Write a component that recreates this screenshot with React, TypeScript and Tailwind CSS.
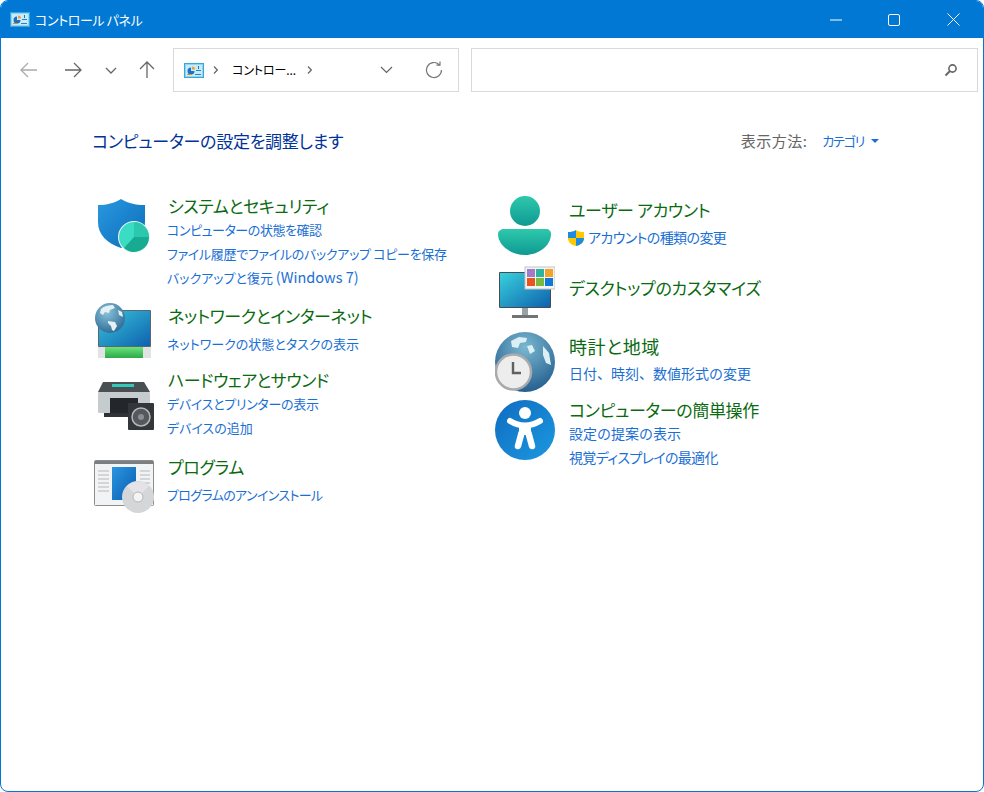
const jp = "font-['Noto_Sans_CJK_JP','Noto_Sans',sans-serif] [font-feature-settings:'palt']"

function PanelIcon() {
  return (
    <svg width="20" height="15" viewBox="0 0 20 15">
      <rect x="0.5" y="0.5" width="19" height="14" fill="#8fd4f2" stroke="#35a7d8" />
      <rect x="2" y="2" width="16" height="11" fill="#c8ebf8" />
      <path d="M7 4.500a3.500 3.500 0 1 0 3.500 3.500H7z" fill="#1f6fc4" />
      <path d="M8 3.500a3 3 0 0 1 3 3H8z" fill="#f0a030" />
      <rect x="3" y="11" width="5" height="1" fill="#e98a20" />
      <rect x="11" y="11" width="6" height="1" fill="#2a80c8" />
      <rect x="14" y="3" width="1" height="3" fill="#1f6fc4" />
      <rect x="12" y="7" width="5" height="1" fill="#2a80c8" />
    </svg>
  )
}

function ShieldIcon() {
  return (
    <svg width="60" height="60" viewBox="0 0 60 60">
      <defs>
        <linearGradient id="sh" x1="0" y1="0" x2="1" y2="1">
          <stop offset="0" stopColor="#2a98e0" />
          <stop offset="1" stopColor="#0b6cb8" />
        </linearGradient>
      </defs>
      <path d="M4 10c9 0 16-2 23-6 7 4 14 6 24 6v17c0 13-9 21-24 26C13 48 4 40 4 27z" fill="url(#sh)" />
      <circle cx="40" cy="42" r="16" fill="#f2f6f6" />
      <circle cx="40" cy="42" r="15" fill="#3adcc4" />
      <path d="M40 42V27a15 15 0 0 1 15 15z" fill="#2cc8ae" />
      <path d="M40 42h15a15 15 0 0 1-25 11z" fill="#18ab92" />
    </svg>
  )
}

function NetworkIcon() {
  return (
    <svg width="60" height="60" viewBox="0 0 60 60">
      <defs>
        <linearGradient id="nm" x1="0" y1="0" x2="1" y2="1">
          <stop offset="0" stopColor="#38c4dc" />
          <stop offset="1" stopColor="#0f62ae" />
        </linearGradient>
        <linearGradient id="ng" x1="0" y1="0" x2="0" y2="1">
          <stop offset="0" stopColor="#6ae47a" />
          <stop offset="1" stopColor="#2ea84a" />
        </linearGradient>
        <radialGradient id="nb" cx="0.4" cy="0.3" r="0.8">
          <stop offset="0" stopColor="#8cc4dc" />
          <stop offset="1" stopColor="#24628e" />
        </radialGradient>
      </defs>
      <rect x="4" y="10" width="53" height="37" rx="1" fill="#5a6670" />
      <rect x="5" y="11" width="51" height="35" fill="url(#nm)" />
      <rect x="4" y="47" width="53" height="11" fill="#dfe3e3" />
      <rect x="11" y="47" width="38" height="11" fill="url(#ng)" />
      <circle cx="16" cy="18" r="15" fill="url(#nb)" />
      <path d="M7 9c3-3 8-4 12-4l2 3-5 2-1 3-4-1-2 3-3-2zM14 21l7 1 2 4-3 5-2-1-1-4-3-3zM24 10l4 2 1 5-4-2z" fill="#e4f0f4" />
    </svg>
  )
}

function PrinterIcon() {
  return (
    <svg width="60" height="60" viewBox="0 0 60 60">
      <path d="M9 8h41l6 10H4z" fill="#4a4f54" />
      <rect x="18" y="10" width="22" height="3" fill="#34c8b8" />
      <rect x="4" y="18" width="52" height="21" rx="1" fill="#c6cbcd" />
      <rect x="16" y="24" width="28" height="15" fill="#23262a" />
      <rect x="10" y="39" width="34" height="4" fill="#2f3236" />
      <rect x="34" y="29" width="26" height="27" rx="1" fill="#33373b" />
      <circle cx="47" cy="43" r="9" fill="#55595d" stroke="#b4b8ba" strokeWidth="1.500" />
      <circle cx="47" cy="43" r="3" fill="#8a8e92" />
    </svg>
  )
}

function ProgramIcon() {
  return (
    <svg width="60" height="60" viewBox="0 0 60 60">
      <defs>
        <linearGradient id="pb" x1="0" y1="0" x2="1" y2="1">
          <stop offset="0" stopColor="#2a96e0" />
          <stop offset="1" stopColor="#0a5cb0" />
        </linearGradient>
      </defs>
      <rect x="0.5" y="5.500" width="59" height="45" rx="1" fill="#f1f3f4" stroke="#8c8c8c" />
      <rect x="1" y="6" width="58" height="3" fill="#7b7f82" />
      <rect x="18" y="12" width="24" height="33" fill="url(#pb)" />
      <path d="M4 16h11M4 20h11M4 24h11M4 28h11M4 32h11M4 36h11M46 16h10M46 20h10M46 24h10M46 28h10" stroke="#b5b8ba" />
      <circle cx="44" cy="42" r="16" fill="#d4d6d8" />
      <path d="M44 42 33 31a16 16 0 0 1 22 0z" fill="#e6e3e8" />
      <circle cx="44" cy="42" r="5" fill="#f4f4f4" stroke="#b4b6b8" />
    </svg>
  )
}

function UserIcon() {
  return (
    <svg width="60" height="60" viewBox="0 0 60 60">
      <defs>
        <linearGradient id="ug" x1="0" y1="0" x2="0" y2="1">
          <stop offset="0" stopColor="#2ec8ac" />
          <stop offset="1" stopColor="#0e9a92" />
        </linearGradient>
      </defs>
      <circle cx="30" cy="16" r="15" fill="url(#ug)" />
      <path d="M9 34h42c3 0 5 2 5 5 0 12-13 21-26 21S3 51 3 39c0-3 3-5 6-5z" fill="url(#ug)" />
    </svg>
  )
}

function DesktopIcon() {
  return (
    <svg width="60" height="60" viewBox="0 0 60 60">
      <defs>
        <linearGradient id="dm" x1="0" y1="0" x2="1" y2="1">
          <stop offset="0" stopColor="#38d0dc" />
          <stop offset="1" stopColor="#0f62ae" />
        </linearGradient>
      </defs>
      <rect x="4" y="10" width="52" height="36" rx="1" fill="#444c54" />
      <rect x="5" y="11" width="50" height="34" fill="url(#dm)" />
      <rect x="27" y="46" width="6" height="8" fill="#9aa2a6" />
      <rect x="17" y="53" width="26" height="3" fill="#6e7478" />
      <rect x="30" y="5" width="30" height="22" fill="#f4f4f4" stroke="#c4c4c4" />
      <rect x="32" y="7" width="8" height="8" fill="#a17ac9" />
      <rect x="41" y="7" width="8" height="8" fill="#2bb5a0" />
      <rect x="50" y="7" width="8" height="8" fill="#f2a32a" />
      <rect x="32" y="16" width="8" height="8" fill="#e8541e" />
      <rect x="41" y="16" width="8" height="8" fill="#7cb83e" />
      <rect x="50" y="16" width="8" height="8" fill="#0f7ad6" />
    </svg>
  )
}

function ClockIcon() {
  return (
    <svg width="60" height="60" viewBox="0 0 60 60">
      <defs>
        <radialGradient id="cg" cx="0.5" cy="0.25" r="0.85">
          <stop offset="0" stopColor="#7ab8d0" />
          <stop offset="1" stopColor="#1a5488" />
        </radialGradient>
      </defs>
      <circle cx="30" cy="30" r="30" fill="url(#cg)" />
      <path d="M16 9l8-4 8 1-1 4-6 1-2 5-6-1zM32 14l5-1 3 6-5 3zM48 14l6 7 2 12-5-2-3-8z" fill="#dceff4" />
      <circle cx="18.500" cy="40" r="17.500" fill="#ededee" stroke="#a8aaac" strokeWidth="2.500" />
      <path d="M18 30v11h8" fill="none" stroke="#5f6062" strokeWidth="2.400" />
    </svg>
  )
}

function AccessIcon() {
  return (
    <svg width="60" height="60" viewBox="0 0 60 60">
      <defs>
        <linearGradient id="ag" x1="0" y1="0" x2="1" y2="1">
          <stop offset="0" stopColor="#0f6cc0" />
          <stop offset="1" stopColor="#1c98e0" />
        </linearGradient>
      </defs>
      <circle cx="30" cy="30" r="30" fill="url(#ag)" />
      <circle cx="30" cy="13" r="6" fill="#fff" />
      <path d="M15 21c5 3 10 4.500 15 4.500S40 24 45 21" fill="none" stroke="#fff" strokeWidth="6" strokeLinecap="round" />
      <path d="M24 24h12v11H24z" fill="#fff" />
      <path d="M26.500 33 23 46M33.500 33 37 46" fill="none" stroke="#fff" strokeWidth="6.500" strokeLinecap="round" />
    </svg>
  )
}

function UacShield() {
  return (
    <svg width="18" height="18" viewBox="0 0 18 18" className="shrink-0">
      <path d="M9 1c2 1.500 4.500 2 8 2v6c0 4-3 7-8 8-5-1-8-4-8-8V3c3.500 0 6-.5 8-2z" fill="#ffc800" />
      <path d="M9 1C7 2.500 4.500 3 1 3v6h8zM9 9v8c5-1 8-4 8-8z" fill="#1b8ce0" />
    </svg>
  )
}

const kana = 'text-[13px] tracking-[-0.3px]'

function Category({ icon, title, links, rowClass, textClass, linksClass, titleClass = 'text-[17px] tracking-[-0.36px]' }: { icon: React.ReactNode; title: string; links: [React.ReactNode, string][]; rowClass: string; textClass: string; linksClass: string; titleClass?: string }) {
  return (
    <div className={`flex gap-[14px] ${rowClass}`}>
      <div className="w-[60px] h-[60px] shrink-0">{icon}</div>
      <div className={textClass}>
        <div className={`${jp} leading-6 text-[#0a6a10] whitespace-nowrap ${titleClass}`}>{title}</div>
        <div className={linksClass}>
          {links.map(([l, cls], i) => (
            <div key={i} className={`${jp} leading-[23.5px] text-[#1a6fd4] whitespace-nowrap ${cls}`}>{l}</div>
          ))}
        </div>
      </div>
    </div>
  )
}

export default function App() {
  return (
    <div className="relative w-[984px] h-[792px] bg-white border border-[#0078d4] rounded-lg overflow-hidden flex flex-col">
      <div className="absolute -top-px left-[211px] right-0 h-px bg-[#c4c4c4]" />

      {/* title bar */}
      <div className="h-[37px] shrink-0 bg-[#0078d4] flex items-center pl-[9px] text-white">
        <PanelIcon />
        <span className={`ml-[5px] text-[13px] tracking-[-0.4px] ${jp}`}>コントロール パネル</span>
        <div className="ml-auto flex items-center">
          <div className="w-[58px] flex justify-center">
            <svg width="12" height="12" viewBox="0 0 12 12"><path d="M0 6h12" stroke="#fff" /></svg>
          </div>
          <div className="w-[58px] flex justify-center">
            <svg width="12" height="12" viewBox="0 0 12 12"><rect x="0.5" y="0.5" width="11" height="11" rx="1.500" fill="none" stroke="#fff" /></svg>
          </div>
          <div className="w-[60px] flex justify-center">
            <svg width="13" height="13" viewBox="0 0 13 13"><path d="M.5.5l12 12M12.500.5l-12 12" stroke="#fff" /></svg>
          </div>
        </div>
      </div>

      {/* toolbar */}
      <div className="h-[44px] mt-[10px] shrink-0 flex items-center">
        <div className="w-[172px] h-full flex items-center">
          <div className="w-[54px] flex justify-center pl-[2px]">
            <svg width="18" height="16" viewBox="0 0 18 16"><path d="M17 8H1M8 1 1 8l7 7" fill="none" stroke="#ababab" strokeWidth="1.300" /></svg>
          </div>
          <div className="w-[36px] flex justify-center">
            <svg width="18" height="16" viewBox="0 0 18 16"><path d="M1 8h16M10 1l7 7-7 7" fill="none" stroke="#666" strokeWidth="1.300" /></svg>
          </div>
          <div className="w-[40px] flex justify-center">
            <svg width="12" height="7" viewBox="0 0 12 7"><path d="M1 1l5 5 5-5" fill="none" stroke="#666" strokeWidth="1.300" /></svg>
          </div>
          <div className="w-[32px] flex justify-center">
            <svg width="16" height="18" viewBox="0 0 16 18"><path d="M8 17V1M1 8l7-7 7 7" fill="none" stroke="#666" strokeWidth="1.300" /></svg>
          </div>
        </div>
        <div className="w-[286px] h-full border border-[#d9d9d9] flex items-center pl-[10px]">
          <PanelIcon />
          <svg className="ml-[9px]" width="5" height="8" viewBox="0 0 5 8"><path d="M1 .5 4.300 4 1 7.500" fill="none" stroke="#666" strokeWidth="1.200" /></svg>
          <span className={`ml-[14px] text-[12px] tracking-[-0.1px] text-black ${jp}`}>コントロー...</span>
          <svg className="ml-[11px]" width="5" height="8" viewBox="0 0 5 8"><path d="M1 .5 4.300 4 1 7.500" fill="none" stroke="#666" strokeWidth="1.200" /></svg>
          <svg className="ml-[68px]" width="13" height="8" viewBox="0 0 13 8"><path d="M1 1l5.500 5.500L12 1" fill="none" stroke="#666" strokeWidth="1.200" /></svg>
          <svg className="ml-[32px]" width="18" height="18" viewBox="0 0 18 18"><path d="M16.500 9a7.500 7.500 0 1 1-2.300-5.400M15 .5v3.600h-3.600" fill="none" stroke="#777" strokeWidth="1.200" /></svg>
        </div>
        <div className="ml-3 w-[507px] h-full border border-[#d9d9d9] flex items-center justify-end pr-[19px]">
          <svg width="14" height="14" viewBox="0 0 14 14"><circle cx="8.500" cy="5.500" r="3.600" fill="none" stroke="#666" strokeWidth="1.600" /><path d="M6 8 1.500 12.500" stroke="#666" strokeWidth="2" /></svg>
        </div>
      </div>

      {/* body */}
      <div className="flex-1 pl-[91px] pr-[104px]">
        <div className="flex items-center justify-between h-6 mt-[37px]">
          <div className={`text-[17px] tracking-[-0.25px] text-[#003399] ${jp}`}>コンピューターの設定を調整します</div>
          <div className="flex items-center">
            <span className={`text-[15px] tracking-[0.5px] text-[#666] ${jp}`}>表示方法:</span>
            <span className={`ml-[15px] text-[13px] tracking-[-1.25px] text-[#1a6fd4] ${jp}`}>カテゴリ</span>
            <svg className="ml-[7px]" width="8" height="4" viewBox="0 0 8 4"><path d="M0 0h8L4 4z" fill="#1a6fd4" /></svg>
          </div>
        </div>
        <div className="mt-[42px] flex">
          <div className="w-[403px] pl-[2px]">
            <Category icon={<ShieldIcon />} title="システムとセキュリティ" rowClass="h-[105px]" textClass="-mt-px" linksClass="-ml-px"
              links={[
                ['コンピューターの状態を確認', 'text-[13px] tracking-[-0.45px]'],
                ['ファイル履歴でファイルのバックアップ コピーを保存', kana],
                [<>バックアップと復元 <span className="text-[14.500px]">(Windows 7)</span></>, 'text-[13px]'],
              ]} />
            <Category icon={<NetworkIcon />} title="ネットワークとインターネット" rowClass="h-[74px]" textClass="pt-1" linksClass="mt-1 -ml-px"
              links={[['ネットワークの状態とタスクの表示', 'text-[13px]']]} />
            <Category icon={<PrinterIcon />} title="ハードウェアとサウンド" titleClass="text-[17px] tracking-[-0.5px]" rowClass="h-[81px]" textClass="-mt-[6px]" linksClass="-ml-px"
              links={[['デバイスとプリンターの表示', kana], ['デバイスの追加', 'text-[13px]']]} />
            <Category icon={<ProgramIcon />} title="プログラム" rowClass="h-[60px]" textClass="" linksClass="mt-1 -ml-px"
              links={[['プログラムのアンインストール', 'text-[13px] tracking-[-0.65px]']]} />
          </div>
          <div>
            <Category icon={<UserIcon />} title="ユーザー アカウント" rowClass="h-[67px]" textClass="pt-[3px]" linksClass="mt-1"
              links={[[<span className="flex items-center -ml-[2px]"><UacShield /><span className="ml-[3px]">アカウントの種類の変更</span></span>, 'text-[14px] tracking-[-0.6px]']]} />
            <Category icon={<DesktopIcon />} title="デスクトップのカスタマイズ" rowClass="h-[70px]" textClass="pt-[14px]" linksClass="" links={[]} />
            <Category icon={<ClockIcon />} title="時計と地域" titleClass="text-[18px] tracking-[0.6px]" rowClass="h-[68px]" textClass="pt-[2px]" linksClass="mt-1"
              links={[['日付、時刻、数値形式の変更', 'text-[14px] [font-feature-settings:normal]']]} />
            <Category icon={<AccessIcon />} title="コンピューターの簡単操作" rowClass="h-[60px]" textClass="-mt-[2px]" linksClass=""
              links={[
                ['設定の提案の表示', 'text-[14px] [font-feature-settings:normal]'],
                ['視覚ディスプレイの最適化', 'text-[14px] tracking-[-0.65px]'],
              ]} />
          </div>
        </div>
      </div>
    </div>
  )
}
